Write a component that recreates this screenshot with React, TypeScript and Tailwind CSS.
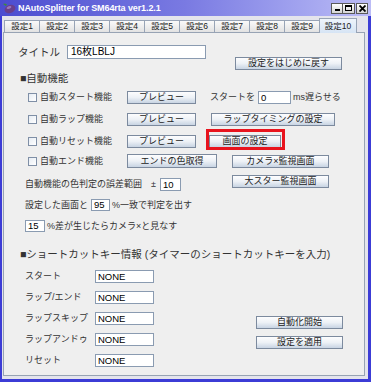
import React from 'react';

const btn =
  'flex items-center justify-center h-[13px] border border-[#7c8a9e] bg-linear-to-b from-[#fdfdfe] via-[#edf1f6] to-[#c8d4e3] text-[9px] leading-none text-[#222] whitespace-nowrap';
const field =
  'flex items-center border border-[#8a9bb1] bg-white pl-[2px] leading-none text-black whitespace-nowrap';

const tabs = ['設定1', '設定2', '設定3', '設定4', '設定5', '設定6', '設定7', '設定8', '設定9'];

const shortcuts = ['スタート', 'ラップ/エンド', 'ラップスキップ', 'ラップアンドゥ', 'リセット'];

function Eggplant() {
  return (
    <svg width="14" height="12" viewBox="0 0 14 12">
      <ellipse cx="8" cy="7" rx="5.5" ry="4" fill="#6a3f8c" transform="rotate(-20 8 7)" />
      <ellipse cx="7" cy="5.5" rx="2.5" ry="1.2" fill="#9a76bb" transform="rotate(-20 7 5.5)" />
      <path d="M1 2 L4 4 L5 2.5 L3 1.5 Z" fill="#3f8a3a" />
    </svg>
  );
}

function TitleBar() {
  return (
    <div className="h-[16px] flex items-center bg-linear-to-r from-[#4c4cd0] via-[#7a7ae2] to-[#bcbcf6] pl-[2px] pr-[3px]">
      <Eggplant />
      <span className="ml-[2px] text-[9px] font-bold text-white leading-none tracking-[-0.1px]">
        NAutoSplitter for SM64rta ver1.2.1
      </span>
      <div className="ml-auto flex">
        <div className="w-[12px] h-[11px] border border-[#5a5a5a] bg-linear-to-b from-white to-[#d4d4d4] flex items-end justify-center pb-[2px]">
          <div className="w-[5px] h-[2px] bg-black" />
        </div>
        <div className="w-[12px] h-[11px] border-y border-r border-[#5a5a5a] bg-linear-to-b from-white to-[#d4d4d4] flex items-center justify-center">
          <div className="w-[7px] h-[6px] border border-black border-t-2" />
        </div>
        <div className="ml-px w-[12px] h-[11px] border border-[#5a5a5a] bg-linear-to-b from-white to-[#d4d4d4] flex items-center justify-center">
          <svg width="7" height="7" viewBox="0 0 7 7">
            <path d="M0.5 0.5 L6.5 6.5 M6.5 0.5 L0.5 6.5" stroke="#000" strokeWidth="1.8" />
          </svg>
        </div>
      </div>
    </div>
  );
}

function Check({ label }: { label: string }) {
  return (
    <div className="flex items-center w-[123px] pl-[24px]">
      <span className="w-[9px] h-[9px] border border-[#7f8fa6] bg-linear-to-br from-[#e6ecf3] to-white" />
      <span className="ml-[3px]">{label}</span>
    </div>
  );
}

export default function App() {
  return (
    <div className="w-[371px] h-[382px] flex flex-col overflow-hidden font-['Liberation_Sans','Noto_Sans_CJK_JP',sans-serif] text-[9px] text-[#333] leading-none">
      <TitleBar />
      <div className="flex-1 flex flex-col border-l-2 border-r-[3px] border-b-[3px] border-[#3c3cd6] bg-[#e4e4ec]">
        <div className="h-[16px] flex items-end pl-[2px]">
          {tabs.map((t) => (
            <div
              key={t}
              className="w-[35px] h-[12px] border-t border-l border-[#98a4b6] bg-linear-to-b from-[#fafafa] to-[#e2e2e2] flex items-center justify-center text-[8.5px] text-[#222]"
            >
              {t}
            </div>
          ))}
          <div className="relative z-10 -mb-px w-[38px] h-[15px] border-t border-x border-[#98a4b6] bg-linear-to-b from-[#eef4fb] to-[#d6e4f4] flex items-center justify-center text-[8.5px] text-[#222]">
            設定10
          </div>
        </div>

        <div className="flex-1 ml-px mr-[3px] mb-[3px] border border-[#97a3b4] bg-[#efefef] flex flex-col pt-[12px]">
          <div className="flex items-start h-[25px]">
            <div className="w-[63px] pl-[14px] h-[14px] flex items-center text-[10.5px]">タイトル</div>
            <div className={`${field} w-[139px] h-[14px] text-[10px] pl-[3px]`}>16枚LBLJ</div>
            <div className={`${btn} ml-[29px] mt-[12px] w-[107px]`}>設定をはじめに戻す</div>
          </div>

          <div className="mt-[2px] h-[12px] pl-[16px] flex items-center text-[10.5px]">■自動機能</div>

          <div className="mt-[7px] h-[13px] flex items-center">
            <Check label="自動スタート機能" />
            <div className={`${btn} w-[69px]`}>プレビュー</div>
            <span className="ml-[14px]">スタートを</span>
            <div className={`${field} ml-[3px] w-[33px] h-[13px] text-[9.5px]`}>0</div>
            <span className="ml-[2px]">ms遅らせる</span>
          </div>

          <div className="mt-[9px] h-[13px] flex items-center">
            <Check label="自動ラップ機能" />
            <div className={`${btn} w-[69px]`}>プレビュー</div>
            <div className={`${btn} ml-[15px] w-[124px]`}>ラップタイミングの設定</div>
          </div>

          <div className="mt-[9px] h-[13px] flex items-center">
            <Check label="自動リセット機能" />
            <div className={`${btn} w-[69px]`}>プレビュー</div>
            <div className="relative ml-[13px]">
              <div className={`${btn} w-[72px]`}>画面の設定</div>
              <div className="absolute -left-[3px] -top-[6px] w-[79px] h-[21px] border-[3px] border-[#e8141e]" />
            </div>
          </div>

          <div className="mt-[6px] h-[14px] flex items-center">
            <Check label="自動エンド機能" />
            <div className={`${btn} w-[90px] h-[14px]`}>エンドの色取得</div>
            <div className={`${btn} ml-[15px] w-[97px]`}>カメラ×監視画面</div>
          </div>

          <div className="mt-[7px] h-[16px] flex items-start">
            <div className="self-end h-[13px] w-[228px] pl-[21px] flex items-center">
              <span>自動機能の色判定の誤差範囲</span>
              <span className="ml-[9px]">±</span>
              <div className={`${field} ml-[4px] w-[21px] h-[13px] text-[9.5px]`}>10</div>
            </div>
            <div className={`${btn} w-[97px]`}>大スター監視画面</div>
          </div>

          <div className="mt-[8px] h-[12px] pl-[21px] flex items-center">
            <span>設定した画面と</span>
            <div className={`${field} ml-[3px] w-[19px] h-[12px] text-[9.5px]`}>95</div>
            <span className="ml-[2px]">%一致で判定を出す</span>
          </div>

          <div className="mt-[9px] h-[12px] pl-[21px] flex items-center">
            <div className={`${field} w-[20px] h-[12px] text-[9.5px]`}>15</div>
            <span className="ml-[2px]">%差が生じたらカメラ×と見なす</span>
          </div>

          <div className="mt-[16px] h-[12px] pl-[16px] flex items-center text-[10.5px]">
            ■ショートカットキー情報 (タイマーのショートカットキーを入力)
          </div>

          <div className="mt-[10px] flex">
            <div className="pl-[21px] flex flex-col gap-[8px]">
              {shortcuts.map((s) => (
                <div key={s} className="h-[13px] flex items-center">
                  <span className="w-[70px]">{s}</span>
                  <div className={`${field} w-[59px] h-[13px] text-[9.5px]`}>NONE</div>
                </div>
              ))}
            </div>
            <div className="ml-[102px] pt-[46px] flex flex-col gap-[7px]">
              <div className={`${btn} w-[87px]`}>自動化開始</div>
              <div className={`${btn} w-[87px]`}>設定を適用</div>
            </div>
          </div>
        </div>
      </div>
    </div>
  );
}
